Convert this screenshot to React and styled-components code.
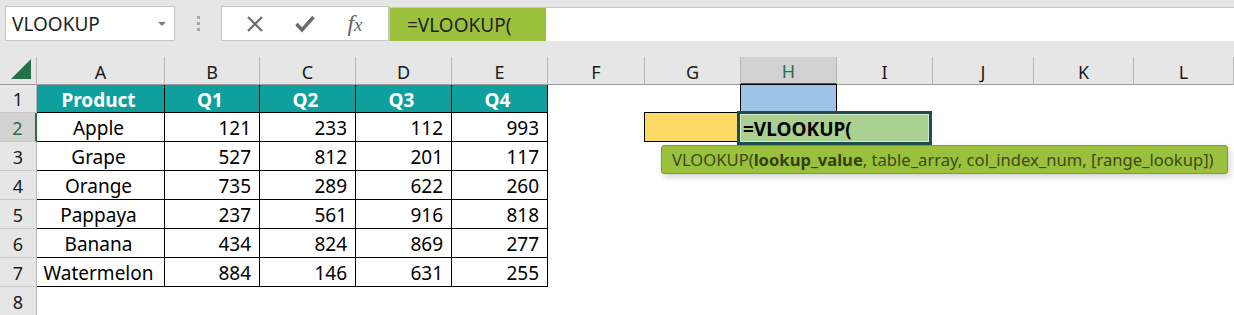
import React from "react";
import styled, { createGlobalStyle } from "styled-components";

const GlobalStyle = createGlobalStyle`
    html, body {
        margin: 0;
        padding: 0;
        background: #fff;
        overflow: hidden;
    }
    body {
        font-family: "Noto Sans", "Open Sans", sans-serif;
        color: #000;
    }
`;

const COLS = [
    { key: "A", w: 128 },
    { key: "B", w: 95 },
    { key: "C", w: 96 },
    { key: "D", w: 96 },
    { key: "E", w: 96 },
    { key: "F", w: 97 },
    { key: "G", w: 96 },
    { key: "H", w: 96 },
    { key: "I", w: 96 },
    { key: "J", w: 101 },
    { key: "K", w: 100 },
    { key: "L", w: 100 },
];

const ROW_HEIGHTS = [28, 29, 29, 29, 29, 29, 29, 29];

const DATA = [
    ["Apple", 121, 233, 112, 993],
    ["Grape", 527, 812, 201, 117],
    ["Orange", 735, 289, 622, 260],
    ["Pappaya", 237, 561, 916, 818],
    ["Banana", 434, 824, 869, 277],
    ["Watermelon", 884, 146, 631, 255],
];

export default function App() {
    const renderCell = (rowIdx, colIdx) => {
        const key = `${rowIdx}-${colIdx}`;
        // header row of table
        if (rowIdx === 0 && colIdx < 5) {
            const labels = ["Product", "Q1", "Q2", "Q3", "Q4"];
            return (
                <Cell key={key} $fill="#0f9f9d" $bordered $align="center" $bold $color="#fff">
                    {labels[colIdx]}
                </Cell>
            );
        }
        if (rowIdx >= 1 && rowIdx <= 6 && colIdx < 5) {
            const v = DATA[rowIdx - 1][colIdx];
            return (
                <Cell key={key} $bordered $align={colIdx === 0 ? "center" : "right"}>
                    {v}
                </Cell>
            );
        }
        if (rowIdx === 0 && colIdx === 7) {
            return <Cell key={key} $fill="#9dc3e6" $box />;
        }
        if (rowIdx === 1 && colIdx === 6) {
            return <Cell key={key} $fill="#ffd966" $box />;
        }
        if (rowIdx === 1 && colIdx === 7) {
            return (
                <Cell key={key}>
                    <EditBox>=VLOOKUP(</EditBox>
                    <Tooltip>
                        VLOOKUP(<b>lookup_value</b>, table_array, col_index_num, [range_lookup])
                    </Tooltip>
                </Cell>
            );
        }
        return <Cell key={key} />;
    };

    return (
        <>
            <GlobalStyle />
            <Page>
                <FormulaRow>
                    <NameBox>
                        VLOOKUP
                        <Caret />
                    </NameBox>
                    <Grip>
                        <span />
                        <span />
                        <span />
                    </Grip>
                    <ButtonBox>
                        <ToolButton>
                            <svg width="18" height="18" viewBox="0 0 18 18">
                                <path d="M2 2 L16 16 M16 2 L2 16" stroke="#6b6b6b" strokeWidth="2.2" fill="none" />
                            </svg>
                        </ToolButton>
                        <ToolButton>
                            <svg width="20" height="18" viewBox="0 0 20 18">
                                <path d="M1.5 9 L7 15 L18.5 2" stroke="#6b6b6b" strokeWidth="3.4" fill="none" />
                            </svg>
                        </ToolButton>
                        <ToolButton>
                            <Fx>
                                f<sub>x</sub>
                            </Fx>
                        </ToolButton>
                    </ButtonBox>
                    <FormulaInput>
                        <FormulaHighlight>=VLOOKUP(</FormulaHighlight>
                    </FormulaInput>
                </FormulaRow>

                <Sheet
                    style={{
                        gridTemplateColumns: `37px ${COLS.map((c) => `${c.w}px`).join(" ")}`,
                        gridTemplateRows: `28px ${ROW_HEIGHTS.map((h) => `${h}px`).join(" ")}`,
                    }}
                >
                    <Corner>
                        <svg width="22" height="22" viewBox="0 0 22 22">
                            <path d="M21 1 L21 21 L1 21 Z" fill="#217346" />
                        </svg>
                    </Corner>
                    {COLS.map((c) => (
                        <ColHeader key={c.key} $active={c.key === "H"}>
                            {c.key}
                        </ColHeader>
                    ))}
                    {ROW_HEIGHTS.map((h, r) => (
                        <React.Fragment key={r}>
                            <RowHeader $active={r === 1}>{r + 1}</RowHeader>
                            {COLS.map((c, ci) => renderCell(r, ci))}
                        </React.Fragment>
                    ))}
                </Sheet>
            </Page>
        </>
    );
}

const Page = styled.div`
    width: 1234px;
    height: 315px;
    overflow: hidden;
    background: #fff;
`;

const FormulaRow = styled.div`
    height: 57px;
    background: #e6e6e6;
    display: flex;
    align-items: flex-start;
    padding: 6px 0 0 5px;
    box-sizing: border-box;
`;

const NameBox = styled.div`
    width: 170px;
    height: 35px;
    box-sizing: border-box;
    background: #fff;
    border: 1px solid #c6c6c6;
    display: flex;
    align-items: center;
    justify-content: space-between;
    padding: 0 8px 0 6px;
    font-size: 19px;
    color: #222;
`;

const Caret = styled.span`
    width: 0;
    height: 0;
    border-left: 4px solid transparent;
    border-right: 4px solid transparent;
    border-top: 4px solid #7a7a7a;
`;

const Grip = styled.div`
    width: 46px;
    height: 35px;
    display: flex;
    flex-direction: column;
    align-items: center;
    justify-content: center;
    gap: 3px;
    span {
        width: 3px;
        height: 3px;
        background: #a6a6a6;
    }
`;

const ButtonBox = styled.div`
    width: 168px;
    height: 35px;
    box-sizing: border-box;
    background: #fff;
    border: 1px solid #c6c6c6;
    display: flex;
    align-items: center;
    justify-content: space-around;
    padding: 0 8px;
`;

const ToolButton = styled.div`
    width: 40px;
    display: flex;
    justify-content: center;
    align-items: center;
`;

const Fx = styled.span`
    font-family: "Liberation Serif", serif;
    font-style: italic;
    font-size: 24px;
    color: #666;
    sub {
        font-size: 19px;
        vertical-align: baseline;
    }
`;

const FormulaInput = styled.div`
    flex: 1;
    height: 34px;
    margin-top: 1px;
    box-sizing: border-box;
    background: #fff;
    border-top: 1px solid #c6c6c6;
    border-left: 1px solid #c6c6c6;
    display: flex;
`;

const FormulaHighlight = styled.div`
    width: 156px;
    height: 100%;
    background: #9bc13c;
    display: flex;
    align-items: center;
    padding-left: 17px;
    box-sizing: border-box;
    font-size: 19px;
    color: #222;
`;

const Sheet = styled.div`
    display: grid;
`;

const Corner = styled.div`
    background: #e6e6e6;
    border-bottom: 1px solid #9b9b9b;
    border-right: 1px solid #b8b8b8;
    box-sizing: border-box;
    display: flex;
    align-items: flex-end;
    justify-content: flex-end;
    padding: 0 4px 4px 0;
`;

const ColHeader = styled.div`
    background: ${(p) => (p.$active ? "#d2d2d2" : "#e6e6e6")};
    color: ${(p) => (p.$active ? "#217346" : "#1a1a1a")};
    border-bottom: ${(p) => (p.$active ? "2px solid #217346" : "1px solid #9b9b9b")};
    border-right: 1px solid #b8b8b8;
    box-sizing: border-box;
    display: flex;
    align-items: center;
    justify-content: center;
    font-size: 18px;
    padding-top: 2px;
`;

const RowHeader = styled.div`
    background: ${(p) => (p.$active ? "#d2d2d2" : "#e6e6e6")};
    color: ${(p) => (p.$active ? "#217346" : "#1a1a1a")};
    border-right: ${(p) => (p.$active ? "2px solid #217346" : "1px solid #b8b8b8")};
    border-bottom: 1px solid #c8c8c8;
    box-sizing: border-box;
    display: flex;
    align-items: center;
    justify-content: center;
    font-size: 18px;
    padding-top: 1px;
`;

const Cell = styled.div`
    position: relative;
    box-sizing: border-box;
    background: ${(p) => p.$fill || "#fff"};
    color: ${(p) => p.$color || "#000"};
    font-weight: ${(p) => (p.$bold ? 700 : 400)};
    font-size: 19px;
    display: flex;
    align-items: center;
    justify-content: ${(p) => (p.$align === "right" ? "flex-end" : p.$align === "center" ? "center" : "flex-start")};
    padding: 2px 8px 0 4px;
    white-space: nowrap;
    border-right: ${(p) => (p.$bordered || p.$box ? "1px solid #000" : "none")};
    border-bottom: ${(p) => (p.$bordered || p.$box ? "1px solid #000" : "none")};
    border-left: ${(p) => (p.$box ? "1px solid #000" : "none")};
    border-top: ${(p) => (p.$box ? "1px solid #000" : "none")};
    margin-left: ${(p) => (p.$box ? "-1px" : "0")};
    margin-top: ${(p) => (p.$box ? "-1px" : "0")};
`;

const EditBox = styled.div`
    position: absolute;
    left: -4px;
    top: -2px;
    width: 195px;
    height: 34px;
    box-sizing: border-box;
    background: #a9d08e;
    border: 3px solid #1f4e4e;
    box-shadow: inset 0 0 0 1px #d8e6cc;
    font-size: 19px;
    font-weight: 700;
    color: #000;
    display: flex;
    align-items: center;
    padding: 2px 0 0 3px;
    z-index: 2;
`;

const Tooltip = styled.div`
    position: absolute;
    left: -80px;
    top: 32px;
    width: 567px;
    height: 29px;
    box-sizing: border-box;
    background: #9bc13c;
    border: 1px solid #7e9c2e;
    border-radius: 3px;
    box-shadow: 2px 3px 6px rgba(0, 0, 0, 0.18);
    color: #3b4a16;
    font-size: 16.6px;
    display: flex;
    align-items: center;
    padding-left: 10px;
    white-space: nowrap;
    z-index: 3;
    b {
        font-weight: 700;
        color: #33400f;
    }
`;
